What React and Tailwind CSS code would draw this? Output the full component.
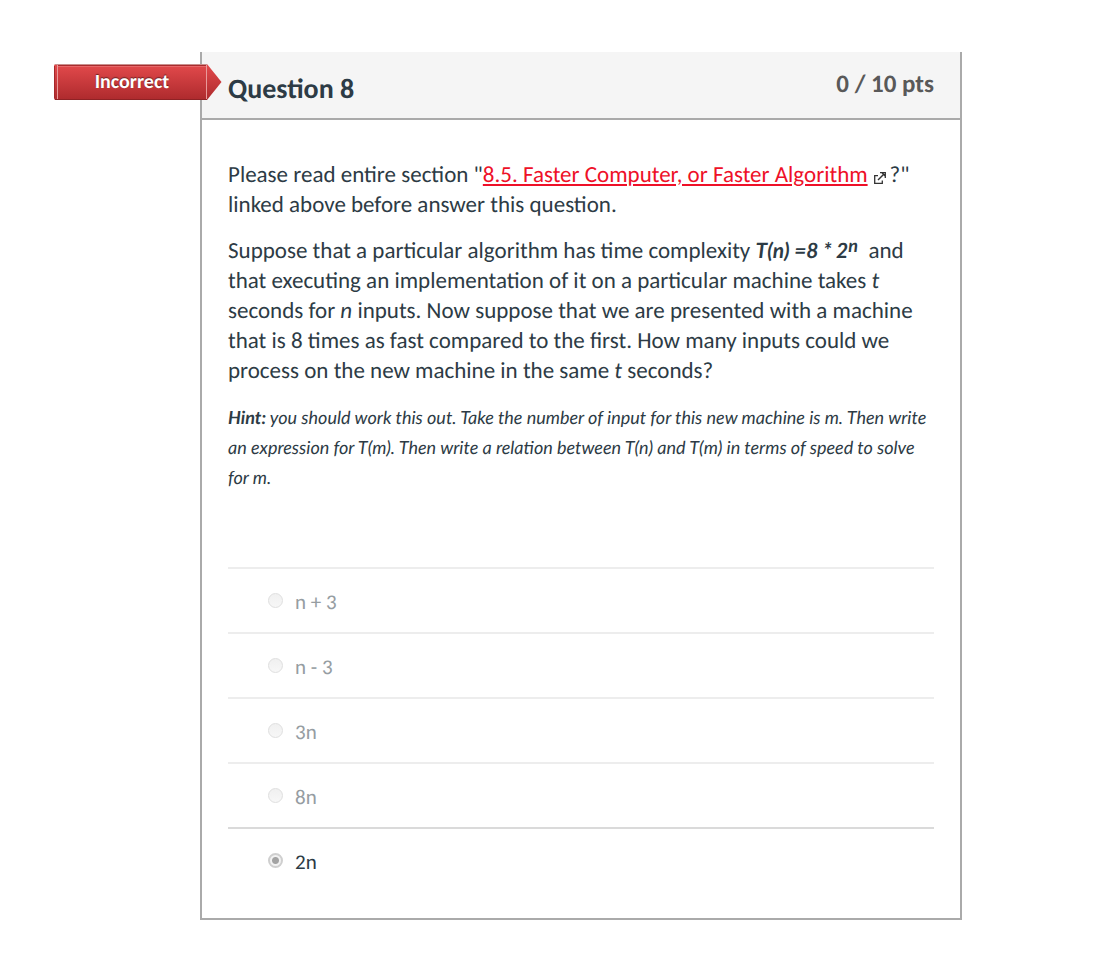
const answers = [
  { id: "a1", text: "n + 3" },
  { id: "a2", text: "n - 3" },
  { id: "a3", text: "3n" },
  { id: "a4", text: "8n" },
  { id: "a5", text: "2n", selected: true },
];

function ExternalLinkIcon() {
  return (
    <svg viewBox="0 0 12 12" className="mr-1 ml-1.5 inline-block size-3 align-[-2px]" fill="none" stroke="#333" strokeWidth="1.3" aria-hidden="true">
      <path d="M4 3.700H.7v7.600h7.600V8.500" />
      <path d="M4 8 10 2" strokeWidth="1.5" />
      <path d="M6 .7h5.300V6M8 .8l3.200 3.200" />
    </svg>
  );
}

function IncorrectFlag() {
  return (
    <div className="absolute top-3 -left-[148px] flex h-9 w-[168px]">
      <svg viewBox="0 0 168 36" className="absolute inset-0 size-full" aria-hidden="true">
        <defs>
          <linearGradient id="flag" x1="0" y1="0" x2="0" y2="1">
            <stop offset="0" stopColor="#e34a4c" />
            <stop offset="1" stopColor="#ad2a2d" />
          </linearGradient>
        </defs>
        <path d="M2 0H153L167.500 18 153 36H2Q0 36 0 34V2Q0 0 2 0Z" fill="url(#flag)" />
        <path d="M1 .5H153" stroke="#c98f8d" />
        <path d="M3 1.500H152" stroke="#a82c2e" />
        <path d="M4 2.500H152" stroke="#e66769" />
        <path d="M1 35.500H153" stroke="#8f2225" />
        <path d="M.5 2V34" stroke="#a5282b" />
        <path d="M3.500 1V35M152.500 1V35" stroke="#e99a9a" />
      </svg>
      <span className="relative w-[156px] text-center text-xl leading-9 font-bold text-white [text-shadow:0_-1px_1px_rgba(0,0,0,0.5)]">
        Incorrect
      </span>
    </div>
  );
}

function Answer({ id, text, selected }) {
  return (
    <label
      htmlFor={id}
      className={
        selected
          ? "flex items-start border-t-2 border-[#dadada] pt-5 pb-[43px] pl-10 text-[#2d3b45]"
          : "flex items-start border-t-2 border-[#ededed] pt-5 pb-[17px] pl-10 text-[#969da2]"
      }
    >
      <input
        id={id}
        type="radio"
        name="answer"
        disabled
        defaultChecked={selected}
        className="mt-1 size-[15px] shrink-0 appearance-none rounded-full border border-[#dfdfdf] bg-linear-to-b from-[#f0f0f0] to-[#f7f7f7] checked:border-2 checked:border-[#cfcfcf] checked:bg-[radial-gradient(circle,#a3a3a3_3px,#f2f2f2_4px)]"
      />
      <span className="ml-3 text-[21px] leading-[26px]">{text}</span>
    </label>
  );
}

export default function App() {
  return (
    <main className="min-h-screen bg-white pt-[52px] pr-[136px] pb-9 pl-[200px] font-['Carlito','Lato',sans-serif] text-[#2d3b45] [text-rendering:geometricPrecision]">
      <section className="relative border-2 border-t-0 border-[#aaa]">
        <IncorrectFlag />
        <header className="flex h-[68px] justify-between border-b-2 border-[#aaa] bg-[#f5f5f5] px-[26px]">
          <h1 className="pt-[21px] text-[28px] leading-8 font-bold">Question 8</h1>
          <span className="pt-4 text-[25px] leading-8 font-bold text-[#595959]">0 / 10 pts</span>
        </header>
        <div className="px-[26px] pt-10">
          <div className="flex flex-col gap-4 text-[23px] leading-[30px]">
            <p>
              Please read entire section "
              <a href="#section" className="text-[#ee1028] underline">8.5. Faster Computer, or Faster Algorithm</a>
              <ExternalLinkIcon />?"
              <br />
              linked above before answer this question.
            </p>
            <p>
              Suppose that a particular algorithm has time complexity{" "}
              <strong className="font-['Lato',sans-serif] text-[21px] leading-none">
                <em>T(n) =8 * 2<sup className="top-[-6px] text-lg leading-none">n</sup></em>
              </strong>
              &nbsp; and
              <br />
              that executing an implementation of it on a particular machine takes <em>t</em>
              <br />
              seconds for <em>n</em> inputs. Now suppose that we are presented with a machine
              <br />
              that is 8 times as fast compared to the first. How many inputs could we
              <br />
              process on the new machine in the same <em>t</em> seconds?
            </p>
            <p className="font-['Lato',sans-serif] text-lg leading-[30px] italic">
              <strong>Hint:</strong> you should work this out. Take the number of input for this new machine is m. Then write
              <br />
              an expression for T(m). Then write a relation between T(n) and T(m) in terms of speed to solve
              <br />
              for m.
            </p>
          </div>
          <div className="mt-[75px]" role="radiogroup" aria-label="Answers">
            {answers.map((answer) => (
              <Answer key={answer.id} {...answer} />
            ))}
          </div>
        </div>
      </section>
    </main>
  );
}
